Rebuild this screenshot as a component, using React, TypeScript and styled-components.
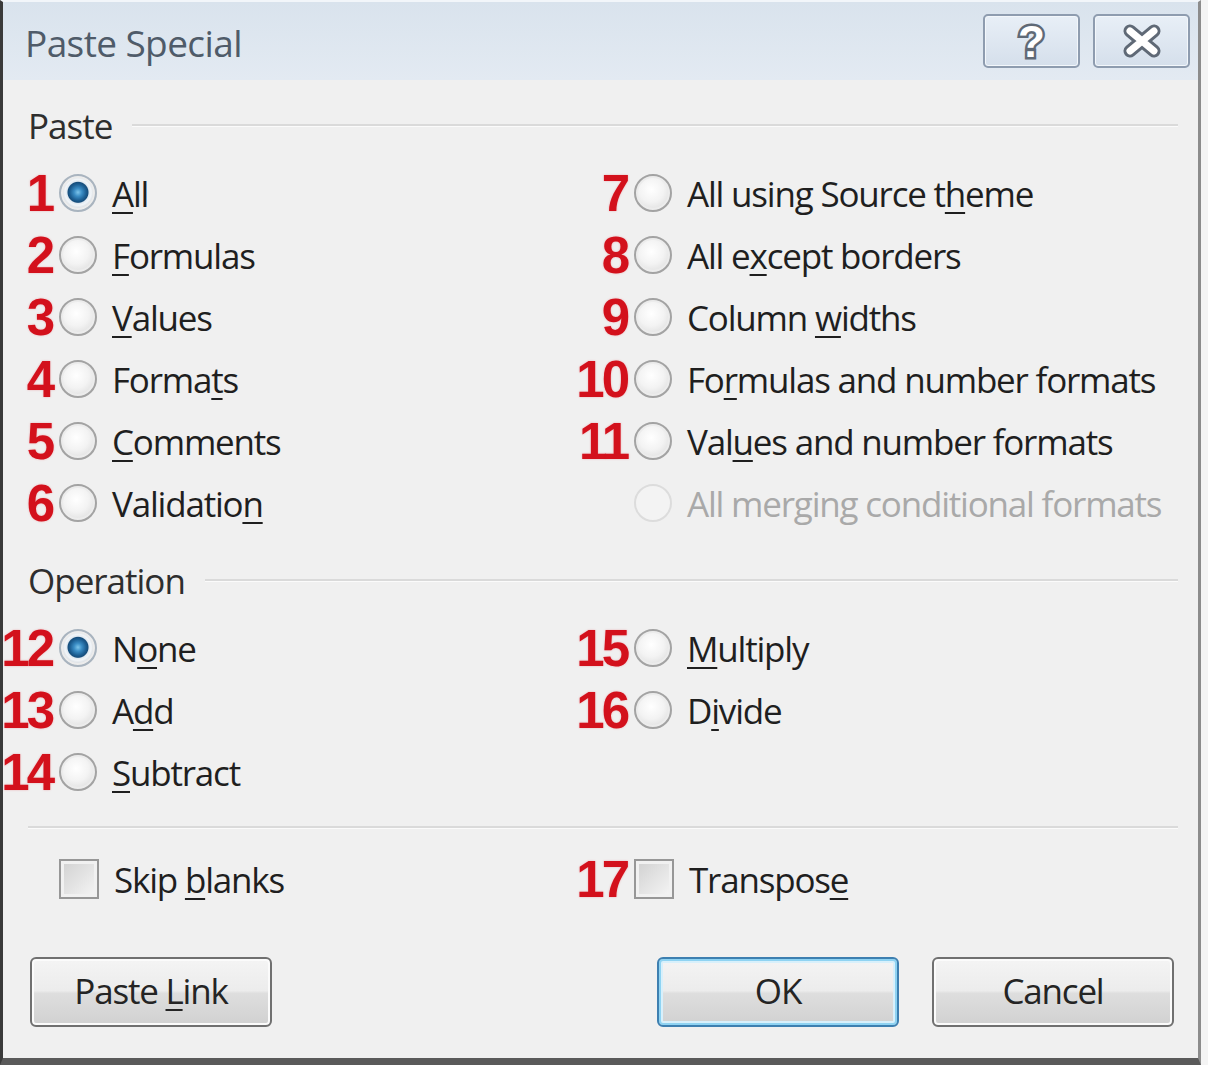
import React from 'react';
import styled, { createGlobalStyle, css } from 'styled-components';

const GlobalStyle = createGlobalStyle`
  html, body { margin: 0; padding: 0; background: #f4f4f4; overflow: hidden; }
  body { font-family: "Open Sans", "Noto Sans", sans-serif; }
`;

const Window = styled.div`
  width: 1201px;
  height: 1065px;
  box-sizing: border-box;
  border-left: 3px solid #3a3a3a;
  border-right: 3px solid #8c8c8c;
  border-bottom: 7px solid #5a5a5a;
  border-top: 2px solid #f2f6fa;
  background: #f0f0f0;
  display: flex;
  flex-direction: column;
`;

const TitleBar = styled.div`
  height: 78px;
  flex: none;
  display: flex;
  align-items: center;
  justify-content: space-between;
  padding: 0 8px 0 22px;
  background: linear-gradient(#d9e3ed, #e3eaf2);
`;

const Title = styled.div`
  font-size: 37px;
  color: #4f5b69;
  letter-spacing: -0.6px;
  margin-top: 2px;
`;

const Controls = styled.div`
  display: flex;
  gap: 13px;
  margin-top: -1px;
`;

const CaptionButton = styled.div`
  width: 97px;
  height: 54px;
  box-sizing: border-box;
  border: 2px solid #8e9caf;
  border-radius: 5px;
  background: linear-gradient(#e8eff7, #d5dfeb);
  box-shadow: inset 0 0 0 1px #f3f7fb;
  display: flex;
  align-items: center;
  justify-content: center;
`;

const HelpGlyph = styled.span`
  font-family: "Liberation Sans", Arial, sans-serif;
  font-weight: bold;
  font-size: 44px;
  line-height: 1;
  color: #ffffff;
  -webkit-text-stroke: 5px #5f6976;
  paint-order: stroke fill;
  margin-top: 3px;
`;

const Body = styled.div`
  flex: 1;
  display: flex;
  flex-direction: column;
`;

const SectionHeader = styled.div<{ $top: number }>`
  display: flex;
  align-items: center;
  gap: 20px;
  height: 40px;
  margin: ${p => p.$top}px 20px 0 25px;
  font-size: 35px;
  color: #2e2e2e;
  letter-spacing: -1px;
`;

const Rule = styled.div`
  flex: 1;
  height: 2px;
  background: #dadada;
  border-bottom: 1px solid #fbfbfb;
`;

const Separator = styled.div`
  height: 2px;
  background: #dadada;
  border-bottom: 1px solid #fbfbfb;
  margin: 23px 20px 0 25px;
`;

const OptionGrid = styled.div<{ $rows: number }>`
  display: grid;
  grid-template-columns: 575px 1fr;
  grid-template-rows: repeat(${p => p.$rows}, 62px);
  grid-auto-flow: column;
  margin-top: 17px;
`;

const Option = styled.div`
  display: grid;
  grid-template-columns: 52px 38px 1fr;
  column-gap: 4px;
  align-items: center;
`;

const Num = styled.span`
  justify-self: unsafe end;
  font-family: "Liberation Sans", Arial, sans-serif;
  font-weight: bold;
  font-size: 51px;
  line-height: 1;
  letter-spacing: -3px;
  padding-right: 3px;
  color: #d3111c;
  white-space: nowrap;
  text-shadow: 0 0 2px rgba(230, 80, 90, 0.45);
`;

const Radio = styled.span<{ $checked?: boolean; $disabled?: boolean }>`
  width: 38px;
  height: 38px;
  border-radius: 50%;
  box-sizing: border-box;
  border: 2px solid #a3a3a3;
  background: radial-gradient(circle at 45% 40%, #ffffff 0%, #f3f3f3 45%, #d3d3d3 100%);
  box-shadow: inset 0 0 0 2px #ececec;
  ${p => p.$checked && css`
    border-color: #a9b4bf;
    background: radial-gradient(circle at 50% 48%, #7cc4ea 0, #3a8cc4 4px, #1d5f93 8px, #174e7c 10px, #dfe8f0 11px, #f2f5f8 13px, #d0d6dc 17px);
  `}
  ${p => p.$disabled && css`
    border-color: #dcdcdc;
    background: #f3f3f3;
    box-shadow: none;
  `}
`;

const Label = styled.span<{ $disabled?: boolean }>`
  padding-left: 11px;
  font-size: 35px;
  letter-spacing: -1.2px;
  white-space: nowrap;
  color: ${p => (p.$disabled ? '#a9a9a9' : '#1f1f1f')};
  line-height: 1;
`;

const Key = styled.u`
  text-decoration-thickness: 2px;
  text-underline-offset: 5px;
`;

const CheckRow = styled.div`
  display: grid;
  grid-template-columns: 575px 1fr;
  height: 60px;
  margin-top: 20px;
`;

const CheckOption = styled.div`
  display: grid;
  grid-template-columns: 52px 40px 1fr;
  column-gap: 4px;
  align-items: center;
`;

const Checkbox = styled.span`
  width: 40px;
  height: 40px;
  box-sizing: border-box;
  border: 2px solid #979797;
  background: linear-gradient(135deg, #d0d0d0, #f6f6f6);
  box-shadow: inset 0 0 0 3px #f1f1f1;
`;

const ButtonRow = styled.div`
  display: flex;
  justify-content: space-between;
  margin-top: 48px;
  padding: 0 24px 0 27px;
`;

const ButtonGroup = styled.div`
  display: flex;
  gap: 33px;
`;

const Button = styled.div<{ $primary?: boolean }>`
  width: 242px;
  height: 70px;
  box-sizing: border-box;
  border: 2px solid #707070;
  border-radius: 6px;
  background: linear-gradient(#f4f4f4 0%, #ececec 48%, #dedede 52%, #d1d1d1 100%);
  box-shadow: inset 0 0 0 2px #fbfbfb;
  text-align: center;
  line-height: 64px;
  font-size: 35px;
  letter-spacing: -1.2px;
  white-space: nowrap;
  color: #242424;
  ${p => p.$primary && css`
    border-color: #3d7fb0;
    box-shadow: inset 0 0 0 2px #8fd3f2, inset 0 0 0 4px #d8f0fb;
  `}
`;

type Opt = { n?: string; label: React.ReactNode; checked?: boolean; disabled?: boolean };

const k = (s: string) => <Key>{s}</Key>;

const pasteOpts: Opt[] = [
  { n: '1', label: <>{k('A')}ll</>, checked: true },
  { n: '2', label: <>{k('F')}ormulas</> },
  { n: '3', label: <>{k('V')}alues</> },
  { n: '4', label: <>Forma{k('t')}s</> },
  { n: '5', label: <>{k('C')}omments</> },
  { n: '6', label: <>Validatio{k('n')}</> },
  { n: '7', label: <>All using Source t{k('h')}eme</> },
  { n: '8', label: <>All e{k('x')}cept borders</> },
  { n: '9', label: <>Column {k('w')}idths</> },
  { n: '10', label: <>Fo{k('r')}mulas and number formats</> },
  { n: '11', label: <>Val{k('u')}es and number formats</> },
  { label: <>All merging conditional formats</>, disabled: true },
];

const opOpts: Opt[] = [
  { n: '12', label: <>N{k('o')}ne</>, checked: true },
  { n: '13', label: <>A{k('d')}d</> },
  { n: '14', label: <>{k('S')}ubtract</> },
  { n: '15', label: <>{k('M')}ultiply</> },
  { n: '16', label: <>D{k('i')}vide</> },
];

const OptionItem = ({ o }: { o: Opt }) => (
  <Option>
    <Num>{o.n ?? ''}</Num>
    <Radio $checked={o.checked} $disabled={o.disabled} />
    <Label $disabled={o.disabled}>{o.label}</Label>
  </Option>
);

const CloseIcon = () => (
  <svg width="44" height="34" viewBox="0 0 44 34">
    <path d="M10 7 L34 27 M34 7 L10 27" stroke="#5f6976" strokeWidth="13" strokeLinecap="round" />
    <path d="M10 7 L34 27 M34 7 L10 27" stroke="#ffffff" strokeWidth="7" strokeLinecap="round" />
  </svg>
);

export default function App() {
  return (
    <>
      <GlobalStyle />
      <Window>
        <TitleBar>
          <Title>Paste Special</Title>
          <Controls>
            <CaptionButton><HelpGlyph>?</HelpGlyph></CaptionButton>
            <CaptionButton><CloseIcon /></CaptionButton>
          </Controls>
        </TitleBar>
        <Body>
          <SectionHeader $top={25}>Paste<Rule /></SectionHeader>
          <OptionGrid $rows={6}>
            {pasteOpts.map((o, i) => <OptionItem key={i} o={o} />)}
          </OptionGrid>
          <SectionHeader $top={26}>Operation<Rule /></SectionHeader>
          <OptionGrid $rows={3}>
            {opOpts.map((o, i) => <OptionItem key={i} o={o} />)}
          </OptionGrid>
          <Separator />
          <CheckRow>
            <CheckOption>
              <Num />
              <Checkbox />
              <Label>Skip {k('b')}lanks</Label>
            </CheckOption>
            <CheckOption>
              <Num>17</Num>
              <Checkbox />
              <Label>Transpos{k('e')}</Label>
            </CheckOption>
          </CheckRow>
          <ButtonRow>
            <Button>Paste {k('L')}ink</Button>
            <ButtonGroup>
              <Button $primary>OK</Button>
              <Button>Cancel</Button>
            </ButtonGroup>
          </ButtonRow>
        </Body>
      </Window>
    </>
  );
}
